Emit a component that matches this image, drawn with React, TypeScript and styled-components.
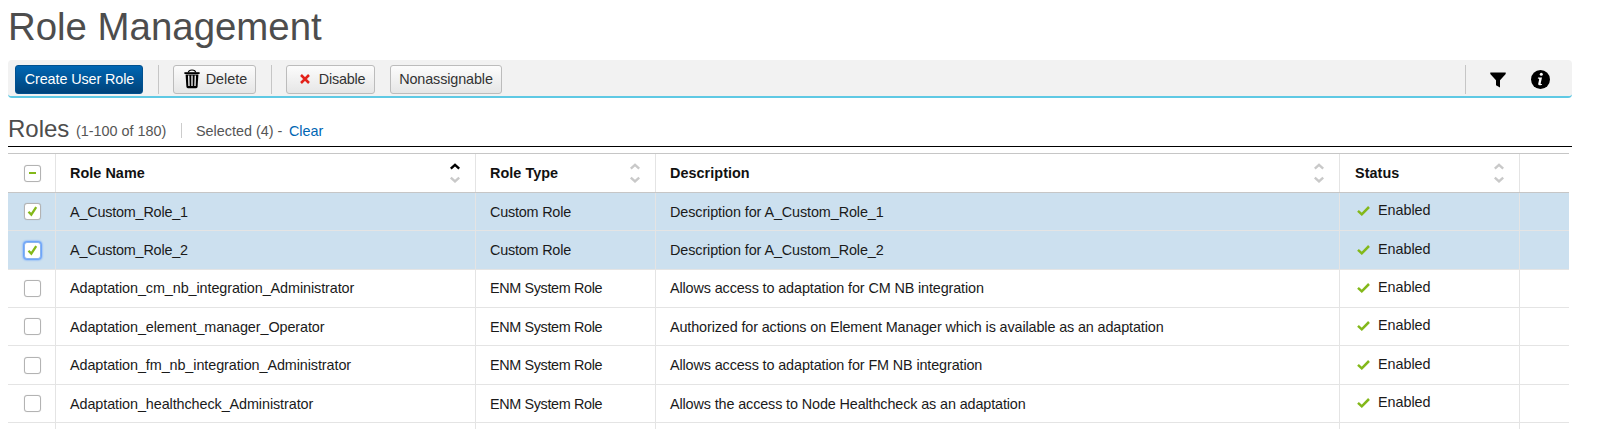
import React from 'react';
import styled, { createGlobalStyle, css } from 'styled-components';

const GlobalStyle = createGlobalStyle`
  html, body { margin: 0; padding: 0; background: #fff; }
  body {
    height: 429px;
    overflow: hidden;
    font-family: "Liberation Sans", Arial, sans-serif;
    font-size: 14.4px;
    color: #1a1a1a;
  }
  * { box-sizing: border-box; }
`;

const Page = styled.main`
  width: 1572px;
  height: 429px;
  padding-left: 8px;
  overflow: hidden;
`;

const Title = styled.h1`
  margin: 0;
  height: 60px;
  padding-top: 5px;
  font-size: 38.4px;
  line-height: 44px;
  font-weight: 400;
  color: #4d4d4d;
  white-space: nowrap;
`;

const Toolbar = styled.div`
  display: flex;
  align-items: flex-start;
  height: 38px;
  padding: 5px 22px 0 7px;
  background: #f2f2f2;
  border-bottom: 2px solid #5fc9e4;
  border-radius: 4px;
`;

const Button = styled.button<{ $primary?: boolean; $width: number; $indent?: number; $tracking?: number }>`
  display: flex;
  align-items: center;
  justify-content: center;
  width: ${(p) => p.$width}px;
  height: 29px;
  padding: 0 0 1px ${(p) => p.$indent ?? 0}px;
  font: inherit;
  line-height: 20px;
  letter-spacing: ${(p) => p.$tracking ?? 0}px;
  white-space: nowrap;
  border-radius: 3px;
  ${(p) =>
    p.$primary
      ? css`
          color: #fff;
          border: 1px solid #00508f;
          background: linear-gradient(#0066b3, #00437a);
        `
      : css`
          color: #333;
          border: 1px solid #bcbcbc;
          background: linear-gradient(#fcfcfc, #e6e6e6);
        `}
`;

const ToolDivider = styled.span`
  width: 1px;
  height: 29px;
  margin: 0 14px 0 15px;
  background: #c6c6c6;
`;

const Gap = styled.span`
  width: 15px;
`;

const Tools = styled.div`
  display: flex;
  margin-left: auto;
  height: 29px;
  align-items: center;
  border-left: 1px solid #c6c6c6;
  padding-left: 24px;
  gap: 25px;
  svg { display: block; }
`;

const Heading = styled.div`
  display: flex;
  align-items: flex-start;
  height: 49px;
  padding-top: 17px;
  line-height: 28px;
  color: #555;
  border-bottom: 1px solid #000;
  white-space: nowrap;
`;

const HeadingTitle = styled.h2`
  margin: 0;
  width: 68px;
  font-size: 24px;
  line-height: 28px;
  font-weight: 400;
  color: #4d4d4d;
`;

const Summary = styled.div`
  display: flex;
  align-items: flex-start;
  padding-top: 8px;
  line-height: 17px;
`;

const Count = styled.span`
  width: 105px;
`;

const Selected = styled.span`
  height: 15px;
  padding-left: 14px;
  border-left: 1px solid #ccc;
`;

const Clear = styled.a`
  margin-left: 6.5px;
  color: #0066b3;
`;

const Table = styled.div`
  width: 1561px;
  margin-top: 6px;
  border-top: 1px solid #c6c6c6;
`;

const Row = styled.div<{ $head?: boolean; $selected?: boolean }>`
  display: grid;
  grid-template-columns: 48px 420px 180px 684px 180px 49px;
  height: ${(p) => (p.$head ? 38.8 : 38.4)}px;
  border-bottom: 1px solid ${(p) => (p.$head ? '#c6c6c6' : '#e4e4e4')};
  background: ${(p) => (p.$selected ? '#cce0ef' : '#fff')};
  font-weight: ${(p) => (p.$head ? 700 : 400)};
  color: ${(p) => (p.$head ? '#111' : '#1a1a1a')};
`;

const Cell = styled.div`
  display: flex;
  align-items: flex-start;
  justify-content: space-between;
  padding: 9.8px 15px 0 14px;
  line-height: 18px;
  border-right: 1px solid #e4e4e4;
  white-space: nowrap;
  &:last-child { border-right: 0; }
`;

const NameCell = styled(Cell)<{ $custom?: boolean }>`
  letter-spacing: ${(p) => (p.$custom ? -0.2 : -0.09)}px;
`;

const TypeCell = styled(Cell)<{ $custom?: boolean }>`
  letter-spacing: ${(p) => (p.$custom ? -0.2 : -0.36)}px;
`;

const DescriptionCell = styled(Cell)<{ $custom?: boolean }>`
  letter-spacing: ${(p) => (p.$custom ? -0.1 : -0.125)}px;
`;

const CheckCell = styled(Cell)<{ $head?: boolean }>`
  padding: ${(p) => (p.$head ? 11 : 10.4)}px 0 0 16px;
`;

const StatusCell = styled(Cell)`
  justify-content: flex-start;
  padding-top: 8.4px;
  padding-left: 17px;
  gap: 8px;
  letter-spacing: -0.05px;
  svg { display: block; margin-top: 5px; }
`;

const HeadCell = styled(Cell)<{ $indent?: number }>`
  padding-top: 10px;
  padding-left: ${(p) => 14 + (p.$indent ?? 0)}px;
  letter-spacing: 0.05px;
`;

const CheckBox = styled.span<{ $focus?: boolean }>`
  display: flex;
  align-items: center;
  justify-content: center;
  width: 17px;
  height: 17px;
  background: #fff;
  border: 1px solid ${(p) => (p.$focus ? '#8ab4f0' : '#b3b3b3')};
  border-radius: 3px;
  box-shadow: ${(p) => (p.$focus ? '0 0 2px 1px #4d90fe' : '0 0 1px rgba(0, 0, 0, .2)')};
`;

const Dash = styled.span`
  width: 7px;
  height: 2px;
  margin-bottom: 1px;
  background: #83b81a;
`;

const SortIcon = styled.svg`
  display: block;
  flex: none;
  margin-top: -1px;
`;

const Tick = ({ width, height }: { width: number; height: number }) => (
  <svg width={width} height={height} viewBox="0 0 13 10" preserveAspectRatio="none">
    <path d="M1 4.800 4.800 8.300 12 1" fill="none" stroke="#83b81a" strokeWidth="2.500" />
  </svg>
);

const BoxTick = () => (
  <svg width="11" height="11" viewBox="0 0 11 11">
    <path d="M1.500 5.800 4.300 8.600 9.200 1.200" fill="none" stroke="#83b81a" strokeWidth="2.300" />
  </svg>
);

const Sort = ({ active }: { active?: boolean }) => (
  <SortIcon width="10" height="20" viewBox="0 0 10 20">
    <path d="M.8 5.700 5 1.900 9.200 5.700" fill="none" stroke={active ? '#000' : '#c9c9c9'} strokeWidth="2.400" />
    <path d="M.8 14.600 5 18.400 9.200 14.600" fill="none" stroke="#c9c9c9" strokeWidth="2.400" />
  </SortIcon>
);

const ButtonIcon = styled.svg<{ $gap: number }>`
  display: block;
  flex: none;
  margin-right: ${(p) => p.$gap}px;
`;

const Trash = () => (
  <ButtonIcon $gap={6} width="16" height="20" viewBox="0 0 16 20">
    <path d="M4.300 3.400C4.500 1.800 5.800 1 8 1s3.500.8 3.700 2.400" fill="none" stroke="#000" strokeWidth="1.200" />
    <path d="M.4 3.200h15.200v1.800H.4z" />
    <path d="M1.600 5.500h12.800l-.8 12.300q-.1 1.400-1.500 1.400H3.900q-1.400 0-1.500-1.400z" />
    <path d="M4.700 6.500 5 17M8 6.500V17M11.300 6.500 11 17" stroke="#fff" strokeWidth="1.300" />
  </ButtonIcon>
);

const Cross = () => (
  <ButtonIcon $gap={9} width="10" height="10" viewBox="0 0 10 10">
    <path d="M1 1 9 9M9 1 1 9" stroke="#e32119" strokeWidth="2.500" />
  </ButtonIcon>
);

const columns = ['Role Name', 'Role Type', 'Description', 'Status'];

const roles = [
  ['A_Custom_Role_1', 'Custom Role', 'Description for A_Custom_Role_1', true],
  ['A_Custom_Role_2', 'Custom Role', 'Description for A_Custom_Role_2', true],
  ['Adaptation_cm_nb_integration_Administrator', 'ENM System Role', 'Allows access to adaptation for CM NB integration', false],
  ['Adaptation_element_manager_Operator', 'ENM System Role', 'Authorized for actions on Element Manager which is available as an adaptation', false],
  ['Adaptation_fm_nb_integration_Administrator', 'ENM System Role', 'Allows access to adaptation for FM NB integration', false],
  ['Adaptation_healthcheck_Administrator', 'ENM System Role', 'Allows the access to Node Healthcheck as an adaptation', false],
] as const;

export default function App() {
  return (
    <Page>
      <GlobalStyle />
      <Title>Role Management</Title>
      <Toolbar>
        <Button $primary $width={128} $indent={1} $tracking={-0.1}>Create User Role</Button>
        <ToolDivider />
        <Button $width={83} $indent={2}><Trash />Delete</Button>
        <ToolDivider />
        <Button $width={89} $indent={4} $tracking={-0.2}><Cross />Disable</Button>
        <Gap />
        <Button $width={112} $tracking={-0.12}>Nonassignable</Button>
        <Tools>
          <svg width="16" height="16" viewBox="0 0 16 16">
            <path d="M.3.500h15.400v1.500L10 8.200v7.300L6 13.200v-5L.3 2z" />
          </svg>
          <svg width="19" height="19" viewBox="0 0 19 19">
            <circle cx="9.500" cy="9.500" r="9.500" />
            <circle cx="10.300" cy="4.300" r="1.500" fill="#fff" />
            <path d="M7 7.600h4l-1.300 5.600q-.3 1.300 1.400.7l-.2.9q-3.900 1.500-3.700-1l1-4.600q.1-.6-1.400-.7z" fill="#fff" />
          </svg>
        </Tools>
      </Toolbar>
      <Heading>
        <HeadingTitle>Roles</HeadingTitle>
        <Summary>
          <Count>(1-100 of 180)</Count>
          <Selected>Selected (4) -</Selected>
          <Clear>Clear</Clear>
        </Summary>
      </Heading>
      <Table>
        <Row $head>
          <CheckCell $head><CheckBox><Dash /></CheckBox></CheckCell>
          {columns.map((name, i) => (
            <HeadCell key={name} $indent={i === 3 ? 1 : 0}>{name}<Sort active={i === 0} /></HeadCell>
          ))}
          <Cell />
        </Row>
        {roles.map(([name, type, description, selected], i) => (
          <Row key={name} $selected={selected}>
            <CheckCell><CheckBox $focus={i === 1}>{selected && <BoxTick />}</CheckBox></CheckCell>
            <NameCell $custom={type === 'Custom Role'}>{name}</NameCell>
            <TypeCell $custom={type === 'Custom Role'}>{type}</TypeCell>
            <DescriptionCell $custom={type === 'Custom Role'}>{description}</DescriptionCell>
            <StatusCell><Tick width={13} height={10} />Enabled</StatusCell>
            <Cell />
          </Row>
        ))}
        <Row><Cell /><Cell /><Cell /><Cell /><Cell /><Cell /></Row>
      </Table>
    </Page>
  );
}
